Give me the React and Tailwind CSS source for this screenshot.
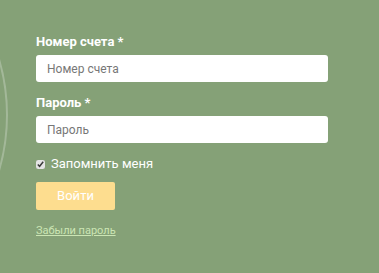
import React from 'react';

const App = () => {
  return (
    <div className="relative w-[379px] h-[273px] overflow-hidden bg-[#85a177] font-['Roboto','Liberation_Sans',sans-serif]">
      {/* decorative arc */}
      <div className="absolute -left-[392px] -top-[85px] w-[400px] h-[400px] rounded-full border-2 border-white/25"></div>

      <form className="relative flex flex-col w-[292px] ml-[36px] pt-[34px]">
        <label className="text-white text-[13px] font-bold leading-[16px] mb-[5px]">Номер счета *</label>
        <input
          type="text"
          placeholder="Номер счета"
          className="h-[27px] rounded-[3px] bg-white px-[11px] text-[12px] text-[#555] placeholder:text-[#777] outline-none"
        />

        <label className="text-white text-[13px] font-bold leading-[16px] mt-[13px] mb-[5px]">Пароль *</label>
        <input
          type="password"
          placeholder="Пароль"
          className="h-[27px] rounded-[3px] bg-white px-[11px] text-[12px] text-[#555] placeholder:text-[#777] outline-none"
        />

        <label className="flex items-center gap-[6px] mt-[13px] text-white text-[13px] leading-[16px]">
          <input type="checkbox" defaultChecked className="w-[9px] h-[9px] m-0 accent-[#e4e4e4]" />
          Запомнить меня
        </label>

        <button
          type="button"
          className="mt-[10px] w-[79px] h-[28px] rounded-[2px] bg-[#fddd8f] text-white text-[13px]"
        >
          Войти
        </button>

        <a href="#" className="mt-[14px] text-[11px] leading-[13px] text-[#cbe5b4] underline">
          Забыли пароль
        </a>
      </form>
    </div>
  );
};

export default App;
